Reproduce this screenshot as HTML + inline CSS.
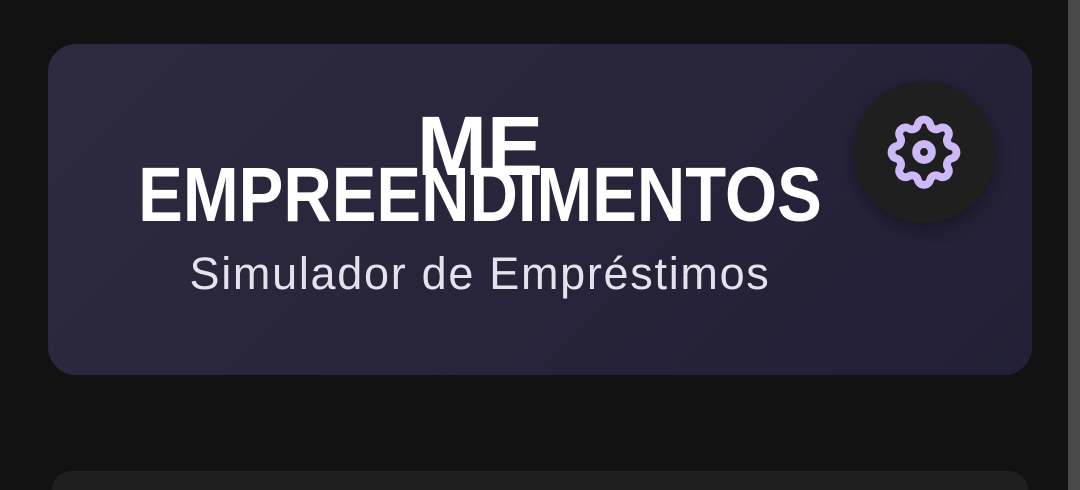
<!DOCTYPE html>
<html><head><style>
html,body{margin:0;padding:0;width:1080px;height:490px;overflow:hidden;background:#121212;font-family:"Liberation Sans",sans-serif}
.sb{position:absolute;left:1068px;top:0;width:12px;height:490px;background:#4a4a4a}
.card{position:absolute;left:48px;top:44px;width:984px;height:331px;border-radius:28px;background:linear-gradient(135deg,#2e2a3f,#221f36)}
.card2{position:absolute;left:52px;top:471px;width:976px;height:19px;border-radius:28px 28px 0 0;background:#1f1f1f}
.t{position:absolute;left:0;width:864px;text-align:center;color:#fff;font-weight:bold;white-space:nowrap}
.me{top:60px;font-size:84px;line-height:84px}
.emp{top:113px;font-size:77px;line-height:77px;transform:scaleX(0.87);transform-origin:432px 0}
.sub{position:absolute;left:0;width:864px;text-align:center;top:205px;font-size:45px;line-height:50px;color:#e6e1ec;letter-spacing:1.7px;white-space:nowrap}
.btn{position:absolute;left:805px;top:37px;width:142px;height:142px;border-radius:50%;background:#1f1f1f;box-shadow:0 6px 16px rgba(0,0,0,.35)}
.btn svg{position:absolute;left:28px;top:28px}
</style></head><body>
<div class="card">
<div class="t me">ME</div>
<div class="t emp">EMPREENDIMENTOS</div>
<div class="sub">Simulador de Empréstimos</div>
<div class="btn"><svg width="86" height="86" viewBox="0 0 24 24" fill="none" stroke="#cdb8f8" stroke-width="2.2" stroke-linejoin="round"><path d="M10.3 4.3c.4-1.8 3-1.8 3.4 0a1.7 1.7 0 0 0 2.6 1.1c1.5-.9 3.3.8 2.4 2.4a1.7 1.7 0 0 0 1 2.6c1.8.4 1.8 3 0 3.4a1.7 1.7 0 0 0-1 2.6c.9 1.5-.9 3.3-2.4 2.4a1.7 1.7 0 0 0-2.6 1c-.4 1.8-3 1.8-3.4 0a1.7 1.7 0 0 0-2.6-1c-1.5.9-3.3-.9-2.4-2.4a1.7 1.7 0 0 0-1-2.6c-1.8-.4-1.8-3 0-3.4a1.7 1.7 0 0 0 1-2.6c-.9-1.5.9-3.3 2.4-2.4a1.7 1.7 0 0 0 2.6-1.1z"/><circle cx="12" cy="12" r="2.2"/></svg></div>
</div>
<div class="card2"></div>
<div class="sb"></div>
</body></html>
